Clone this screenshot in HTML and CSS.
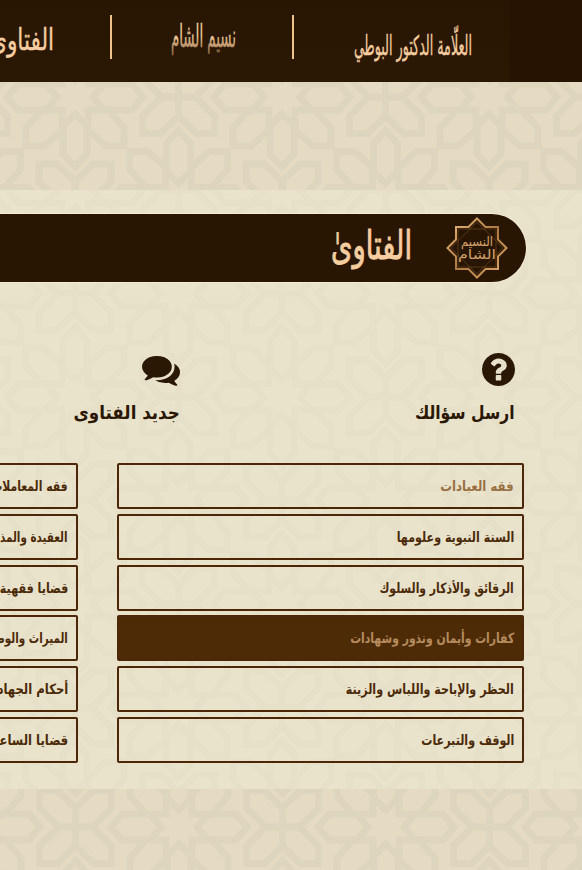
FILE: index.html
```
<!DOCTYPE html>
<html lang="ar" dir="rtl">
<head>
<meta charset="utf-8">
<title>الفتاوى</title>
<link rel="stylesheet" href="styles.css">
</head>
<body>
<svg class="defs" width="0" height="0" aria-hidden="true">
  <defs>
    <g id="petal"><path d="M13 13H33L49 31V49H31L13 33Z"/></g>
    <g id="rosette">
      <path d="M18 0L29-13H57L68 0 57 13H29Z"/><path d="M-18 0L-29-13H-57L-68 0-57 13H-29Z"/>
      <path d="M0 17L12 29V57L0 70-12 57V29Z"/><path d="M0-17L12-29V-57L0-70-12-57V-29Z"/>
      <use href="#petal"/><use href="#petal" transform="scale(-1 1)"/><use href="#petal" transform="scale(1 -1)"/><use href="#petal" transform="scale(-1 -1)"/>
    </g>
    <g id="cross">
      <path d="M0 0H17L36 19V36.500H18L0 19Z"/><path d="M0 0H-17L-36 19V36.500H-18L0 19Z"/>
      <path d="M0 0H17L36-19V-36.500H18L0-19Z"/><path d="M0 0H-17L-36-19V-36.500H-18L0-19Z"/>
    </g>
    <g id="tile" fill="none" stroke-width="6.800">
      <use href="#rosette"/><use href="#rosette" x="207"/><use href="#rosette" y="207"/><use href="#rosette" x="207" y="207"/>
      <use href="#rosette" x="103.500" y="103.500"/>
      <use href="#cross" x="103.500"/><use href="#cross" x="103.500" y="207"/><use href="#cross" y="103.500"/><use href="#cross" x="207" y="103.500"/>
    </g>
    <pattern id="p-top" width="207" height="207" patternUnits="userSpaceOnUse" x="75" y="15"><use href="#tile" stroke="#ddd5bd"/></pattern>
    <pattern id="p-panel" width="207" height="207" patternUnits="userSpaceOnUse" x="75" y="0"><use href="#tile" stroke="#e6e0c9"/></pattern>
    <pattern id="p-foot" width="207" height="207" patternUnits="userSpaceOnUse" x="179" y="38"><use href="#tile" stroke="#ddd5bd"/></pattern>
    <linearGradient id="gold" x1="0" y1="0" x2="1" y2="1"><stop offset="0" stop-color="#efbd80"/><stop offset=".5" stop-color="#ad7940"/><stop offset="1" stop-color="#e5ae70"/></linearGradient>
    <linearGradient id="fade" x1="0" y1="0" x2="0" y2="1"><stop offset=".5" stop-color="#f5cda0"/><stop offset="1" stop-color="#8b633f"/></linearGradient>
  </defs>
</svg>

<header class="topbar">
  <nav class="nav">
    <a class="nav-item nav-doctor"><svg width="126" height="60"><text class="script" x="122" y="45" font-size="27" textLength="118" lengthAdjust="spacingAndGlyphs">العلّامة الدكتور البوطي</text></svg></a>
    <i class="rule"></i>
    <a class="nav-item nav-naseem"><svg width="74" height="60"><text class="script faded" x="69" y="37" font-size="32" textLength="65" lengthAdjust="spacingAndGlyphs">نسيم الشام</text></svg></a>
    <i class="rule"></i>
    <a class="nav-item nav-fatwa"><svg width="72" height="60"><text class="script" x="68" y="40" font-size="30" textLength="64" lengthAdjust="spacingAndGlyphs">الفتاوى</text></svg></a>
  </nav>
</header>

<section class="band band-top"><svg class="pattern"><rect width="100%" height="100%" fill="url(#p-top)"/></svg></section>

<main class="panel">
  <svg class="pattern"><rect width="100%" height="100%" fill="url(#p-panel)"/></svg>
  <div class="banner">
    <svg class="emblem" width="62" height="62" viewBox="-31 -31 62 62">
      <path d="M0-29.500L8.500-21H21V-8.500L29.500 0 21 8.500V21H8.500L0 29.500-8.500 21H-21V8.500L-29.500 0-21-8.500V-21H-8.500Z" fill="none" stroke="url(#gold)" stroke-width="2"/>
      <path d="M0-26L26 0 0 26-26 0ZM-19-19H19V19H-19Z" fill="none" stroke="#80552b" stroke-width=".5"/>
      <text class="mark" x="16" y="-2" font-size="13" textLength="32" lengthAdjust="spacingAndGlyphs">النسيم</text>
      <text class="mark" x="19" y="11" font-size="13" textLength="38" lengthAdjust="spacingAndGlyphs">الشام</text>
    </svg>
    <h1 class="title"><svg width="90" height="66"><text class="script" x="85" y="44" font-size="40" textLength="81" lengthAdjust="spacingAndGlyphs">الفتاوىٰ</text></svg></h1>
  </div>

  <div class="actions">
    <a class="action">
      <svg class="icon" width="33" height="33" viewBox="128 128 1536 1536"><path d="M1024 1376v-192q0-14-9-23t-23-9h-192q-14 0-23 9t-9 23v192q0 14 9 23t23 9h192q14 0 23-9t9-23zm256-672q0-88-55.500-163t-138.500-116-170-41q-243 0-371 213-15 24 8 42l132 100q7 6 19 6 16 0 25-12 53-68 86-92 34-24 86-24 48 0 85.500 26t37.500 59q0 38-20 61t-68 45q-63 28-115.500 86.500t-52.500 125.500v36q0 14 9 23t23 9h192q14 0 23-9t9-23q0-19 21.500-49.500t54.500-49.500q32-18 49-28.500t46-35 44.500-48 28-60.500 12.500-81zm384 192q0 209-103 385.500t-279.500 279.500-385.500 103-385.500-103-279.500-279.500-103-385.500 103-385.500 279.500-279.500 385.500-103 385.500 103 279.500 279.500 103 385.500z"/></svg>
      <span class="action-label narrow">ارسل سؤالك</span>
    </a>
    <a class="action">
      <svg class="icon comments" width="38" height="33" viewBox="0 120 1792 1556"><path d="M1408 768q0 139-94 257t-256.500 186.500-353.500 68.500q-86 0-176-16-124 88-278 128-36 9-86 16h-3q-11 0-20.500-8t-11.500-21q-1-3-1-6.500t.5-6.500 2-6l2.500-5 3.500-5.500 4-5 4.500-5 4-4.500q5-6 23-25t26-29.500 22.500-29 25-38.500 20.500-44q-124-72-195-177t-71-224q0-139 94-257t256.500-186.500 353.500-68.500 353.500 68.500 256.500 186.500 94 257zm384 256q0 120-71 224.500t-195 176.500q10 24 20.500 44t25 38.500 22.500 29 26 29.500 23 25q1 1 4 4.500t4.500 5 4 5 3.500 5.500l2.500 5 2 6 .5 6.500-1 6.500q-3 14-13 22t-22 7q-50-7-86-16-154-40-278-128-90 16-176 16-271 0-472-132 58 4 88 4 161 0 309-45t264-129q125-92 192-212t67-254q0-77-23-152 129 71 204 178t75 230z"/></svg>
      <span class="action-label">جديد الفتاوى</span>
    </a>
  </div>

  <div class="topics">
    <a class="topic visited"><span>فقه العبادات</span></a><a class="topic dense"><span>فقه المعاملات</span></a>
    <a class="topic"><span>السنة النبوية وعلومها</span></a><a class="topic tight"><span>العقيدة والمذاهب</span></a>
    <a class="topic dense"><span>الرقائق والأذكار والسلوك</span></a><a class="topic"><span>قضايا فقهية</span></a>
    <a class="topic dense active"><span>كفارات وأيمان ونذور وشهادات</span></a><a class="topic tight"><span>الميراث والوصية</span></a>
    <a class="topic"><span>الحظر والإباحة واللباس والزينة</span></a><a class="topic wide"><span>أحكام الجهاد</span></a>
    <a class="topic"><span>الوقف والتبرعات</span></a><a class="topic wide"><span>قضايا الساعة</span></a>
  </div>
</main>

<section class="band band-foot"><svg class="pattern"><rect width="100%" height="100%" fill="url(#p-foot)"/></svg></section>
</body>
</html>
```
FILE: styles.css
```
* { box-sizing: border-box; }
html { overflow: hidden; }
body {
  margin: 0;
  height: 870px;
  overflow: hidden;
  display: flex;
  flex-direction: column;
  background: #e5dbc3;
  color: #2a1704;
  font-family: "DejaVu Sans", sans-serif;
}
.defs { position: absolute; }
.topbar {
  flex: none;
  height: 82px;
  background: linear-gradient(to left, #261302 72px, transparent 74px), linear-gradient(#291602, #2b1803);
}
.nav { display: flex; padding: 15px 106px 0 0; }
.nav-item { flex: none; height: 60px; margin-top: -5px; }
.nav-item svg, .title svg { display: block; overflow: visible; }
.nav-doctor { margin-left: 56px; }
.nav-naseem { margin: -5px 51px 0 55px; }
.nav-fatwa { margin-right: 52px; }
.rule { flex: none; width: 2px; height: 44px; background: #efc28a; }
.script { fill: #f5cda0; stroke: #f5cda0; stroke-width: .4px; font-family: "DejaVu Sans", sans-serif; font-weight: normal; }
.title .script { stroke-width: 1px; }
.faded { fill: url(#fade); stroke: url(#fade); }
.mark { fill: #d3a36b; font-family: "DejaVu Sans", sans-serif; }
.band { position: relative; flex: none; }
.band-top { height: 108px; }
.band-foot { flex: 1; }
.pattern { position: absolute; inset: 0; width: 100%; height: 100%; z-index: -1; }
.panel {
  position: relative;
  z-index: 0;
  flex: none;
  height: 599px;
  padding: 24px 56px 0 0;
  background: #eae3cc;
}
.banner {
  display: flex;
  align-items: center;
  width: 900px;
  height: 68px;
  padding-right: 18px;
  border-radius: 0 34px 34px 0;
  background: #291602;
  box-shadow: 0 0 0 1px #f4ecd5;
}
.title { margin: 0 29px 0 0; }
.actions { display: grid; grid-template-columns: 300px 300px; gap: 35px; margin: 71px 11px 0 0; }
.action { display: flex; flex-direction: column; align-items: flex-start; }
.icon { display: block; fill: #2a1704; }
.action-label { margin-top: 12px; font-size: 19px; line-height: 28px; font-weight: bold; white-space: nowrap; transform: scaleX(.88); transform-origin: right; }
.narrow { transform: scaleX(.82); }
.topics {
  display: grid;
  grid-template-columns: 407px 407px;
  gap: 4.750px 39px;
  margin: 37px 2px 0 0;
}
.topic {
  display: flex;
  align-items: center;
  height: 46px;
  padding: 0 8px;
  border: 2px solid #4b2708;
  border-radius: 2px;
  color: #4b2a08;
  font-size: 14px;
  font-weight: bold;
  white-space: nowrap;
}
.topic span { transform: scaleX(.793); transform-origin: right; }
.topic.dense span { transform: scaleX(.773); }
.topic.tight span { transform: scaleX(.74); }
.topic.wide span { transform: scaleX(.83); }
.topic.visited span { transform: scaleX(.837); }
.topic.visited { color: #997044; }
.topic.active { background: #4e2b07; color: #b58b5e; }
```
